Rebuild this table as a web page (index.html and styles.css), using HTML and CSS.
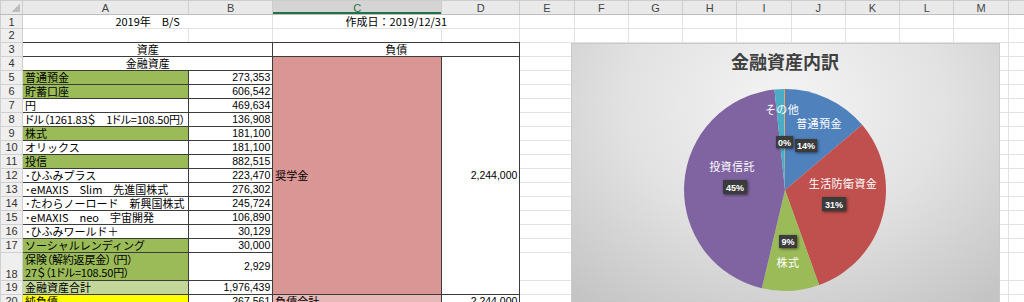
FILE: index.html
```html
<!DOCTYPE html>
<html lang="ja">
<head>
    <meta charset="UTF-8">
    <meta name="viewport" content="width=device-width, initial-scale=1.0">
    <title>2019年 B/S</title>
    <link rel="stylesheet" href="styles.css">
</head>
<body>
<div class="sheet-wrap">
    <table class="sheet">
        <colgroup>
            <col class="c-rh"><col class="c-a"><col class="c-b"><col class="c-c"><col class="c-d">
            <col class="c-std"><col class="c-std"><col class="c-std"><col class="c-std"><col class="c-std">
            <col class="c-std"><col class="c-std"><col class="c-std"><col class="c-std"><col class="c-std">
        </colgroup>
        <thead>
            <tr class="hdr">
                <th class="corner"></th><th>A</th><th>B</th><th class="sel">C</th><th>D</th><th>E</th>
                <th>F</th><th>G</th><th>H</th><th>I</th><th>J</th><th>K</th><th>L</th><th>M</th><th></th>
            </tr>
        </thead>
        <tbody>
            <tr><th>1</th><td colspan="2" class="center">2019年　B/S</td><td colspan="2" class="center">作成日：2019/12/31</td>
                <td></td><td></td><td></td><td></td><td></td><td></td><td></td><td></td><td></td><td></td></tr>
            <tr><th>2</th><td class="top-edge"></td><td class="top-edge"></td><td class="top-edge"></td><td class="top-edge"></td>
                <td></td><td></td><td></td><td></td><td></td><td></td><td></td><td></td><td></td><td></td></tr>
            <tr><th>3</th><td colspan="2" class="bx center">資産</td><td colspan="2" class="bx center">負債</td>
                <td></td><td></td><td></td><td></td><td></td><td></td><td></td><td></td><td></td><td></td></tr>
            <tr><th>4</th><td colspan="2" class="bx center">金融資産</td>
                <td rowspan="16" class="bx loan mid">奨学金</td><td rowspan="16" class="bx num mid">2,244,000</td>
                <td></td><td></td><td></td><td></td><td></td><td></td><td></td><td></td><td></td><td></td></tr>
            <tr><th>5</th><td class="bx green">普通預金</td><td class="bx num">273,353</td>
                <td></td><td></td><td></td><td></td><td></td><td></td><td></td><td></td><td></td><td></td></tr>
            <tr><th>6</th><td class="bx green">貯蓄口座</td><td class="bx num">606,542</td>
                <td></td><td></td><td></td><td></td><td></td><td></td><td></td><td></td><td></td><td></td></tr>
            <tr><th>7</th><td class="bx">円</td><td class="bx num">469,634</td>
                <td></td><td></td><td></td><td></td><td></td><td></td><td></td><td></td><td></td><td></td></tr>
            <tr><th>8</th><td class="bx tight">ドル（1261.83＄　1ドル=108.50円）</td><td class="bx num">136,908</td>
                <td></td><td></td><td></td><td></td><td></td><td></td><td></td><td></td><td></td><td></td></tr>
            <tr><th>9</th><td class="bx green">株式</td><td class="bx num">181,100</td>
                <td></td><td></td><td></td><td></td><td></td><td></td><td></td><td></td><td></td><td></td></tr>
            <tr><th>10</th><td class="bx">オリックス</td><td class="bx num">181,100</td>
                <td></td><td></td><td></td><td></td><td></td><td></td><td></td><td></td><td></td><td></td></tr>
            <tr><th>11</th><td class="bx green">投信</td><td class="bx num">882,515</td>
                <td></td><td></td><td></td><td></td><td></td><td></td><td></td><td></td><td></td><td></td></tr>
            <tr><th>12</th><td class="bx">･ひふみプラス</td><td class="bx num">223,470</td>
                <td></td><td></td><td></td><td></td><td></td><td></td><td></td><td></td><td></td><td></td></tr>
            <tr><th>13</th><td class="bx">･eMAXIS　Slim　先進国株式</td><td class="bx num">276,302</td>
                <td></td><td></td><td></td><td></td><td></td><td></td><td></td><td></td><td></td><td></td></tr>
            <tr><th>14</th><td class="bx">･たわらノーロード　新興国株式</td><td class="bx num">245,724</td>
                <td></td><td></td><td></td><td></td><td></td><td></td><td></td><td></td><td></td><td></td></tr>
            <tr><th>15</th><td class="bx">･eMAXIS　neo　宇宙開発</td><td class="bx num">106,890</td>
                <td></td><td></td><td></td><td></td><td></td><td></td><td></td><td></td><td></td><td></td></tr>
            <tr><th>16</th><td class="bx">･ひふみワールド＋</td><td class="bx num">30,129</td>
                <td></td><td></td><td></td><td></td><td></td><td></td><td></td><td></td><td></td><td></td></tr>
            <tr><th>17</th><td class="bx green">ソーシャルレンディング</td><td class="bx num">30,000</td>
                <td></td><td></td><td></td><td></td><td></td><td></td><td></td><td></td><td></td><td></td></tr>
            <tr class="tall"><th class="bottom">18</th><td class="bx green tight two">保険（解約返戻金）（円）<br>27＄（1ドル=108.50円）</td><td class="bx num mid">2,929</td>
                <td></td><td></td><td></td><td></td><td></td><td></td><td></td><td></td><td></td><td></td></tr>
            <tr><th>19</th><td class="bx green-lt">金融資産合計</td><td class="bx num">1,976,439</td>
                <td></td><td></td><td></td><td></td><td></td><td></td><td></td><td></td><td></td><td></td></tr>
            <tr><th>20</th><td class="bx yellow">純負債</td><td class="bx num">267,561</td>
                <td class="bx loan-lt">負債合計</td><td class="bx num">2,244,000</td>
                <td></td><td></td><td></td><td></td><td></td><td></td><td></td><td></td><td></td><td></td></tr>
        </tbody>
    </table>

    <div class="chart">
        <svg width="429" height="270" viewBox="0 0 429 270">
            <text class="chart-title" x="214" y="26" text-anchor="middle">金融資産内訳</text>
            <g class="pie">
                <path fill="#4f81bd" d="M214 147 L214 46 A101 101 0 0 1 291.14 81.81 Z"/>
                <path fill="#c0504d" d="M214 147 L291.14 81.81 A101 101 0 0 1 248.10 242.07 Z"/>
                <path fill="#9bbb59" d="M214 147 L248.10 242.07 A101 101 0 0 1 190.83 245.30 Z"/>
                <path fill="#8064a2" d="M214 147 L190.83 245.30 A101 101 0 0 1 203.46 46.56 Z"/>
                <path fill="#4bacc6" d="M214 147 L203.46 46.56 A101 101 0 0 1 213.07 46 Z"/>
                <path fill="#f79646" d="M214 147 L213.07 46 A101 101 0 0 1 214 46 Z"/>
            </g>
            <g class="names" text-anchor="middle">
                <text x="211" y="71">その他</text>
                <text x="248" y="85">普通預金</text>
                <text x="161" y="128">投資信託</text>
                <text x="272" y="145">生活防衛資金</text>
                <text x="217" y="224">株式</text>
            </g>
            <g class="pct">
                <rect x="205" y="93" width="17" height="12"/>
                <text x="213.5" y="102.5">0%</text>
                <rect x="224" y="96" width="22" height="13"/>
                <text x="235" y="106">14%</text>
                <rect x="152" y="137" width="24" height="14"/>
                <text x="164" y="147.5">45%</text>
                <rect x="251" y="154" width="24" height="14"/>
                <text x="263" y="164.5">31%</text>
                <rect x="208" y="192" width="18" height="13"/>
                <text x="217" y="202">9%</text>
            </g>
        </svg>
    </div>
</div>
</body>
</html>
```

FILE: styles.css
```css
html, body {
    margin: 0;
    padding: 0;
    background: #fff;
    overflow: hidden;
}
body {
    width: 1024px;
    height: 302px;
    font-family: "Liberation Sans", "Noto Sans CJK JP", sans-serif;
    color: #000;
}
.sheet-wrap {
    position: relative;
    width: 1024px;
    height: 302px;
    overflow: hidden;
}
.sheet {
    border-collapse: collapse;
    table-layout: fixed;
    width: 1063px;
}
.c-rh { width: 22px; }
.c-a { width: 165px; }
.c-b { width: 84px; }
.c-c { width: 168px; }
.c-d { width: 78px; }
.c-std { width: 54px; }

.sheet tr {
    height: 13.75px;
}
.sheet tr.tall {
    height: 27.5px;
}
.sheet td {
    border: 1px solid #e2e2e2;
    padding: 0 2px;
    font-size: 11px;
    line-height: 13px;
    white-space: nowrap;
    overflow: hidden;
    vertical-align: bottom;
    font-family: "Noto Sans CJK JP", "Liberation Sans", sans-serif;
}
.sheet tbody th {
    background: #efefef;
    border: 1px solid #d0d0d0;
    font-weight: normal;
    font-size: 11px;
    line-height: 12px;
    color: #333;
    padding: 0;
    text-align: center;
}
.sheet tbody th.bottom {
    vertical-align: bottom;
}
.sheet .hdr {
    height: 14px;
}
.sheet .hdr th {
    background: #e9e9e9;
    border: 1px solid #cdcdcd;
    border-bottom-color: #bdbdbd;
    font-weight: normal;
    font-size: 11px;
    line-height: 12px;
    color: #444;
    padding: 0;
}
.sheet .hdr th.sel {
    background: #d4d4d4;
    color: #217346;
    box-shadow: inset 0 -2px 0 #217346;
}
.sheet .hdr th.corner {
    background: #e9e9e9 linear-gradient(135deg, transparent 50%, #bdbdbd 50%) no-repeat right 2px bottom 2px / 9px 9px;
}

.sheet td.bx {
    border: 1px solid #3c3c3c;
}
.sheet td.top-edge {
    border-bottom-color: #3c3c3c;
}
.center {
    text-align: center;
}
.sheet td.num {
    text-align: right;
    font-family: "Liberation Sans", sans-serif;
    font-size: 10.5px;
}
.sheet td.mid {
    vertical-align: middle;
}
.sheet td.tight {
    font-feature-settings: "palt";
    letter-spacing: -0.2px;
    padding-right: 0;
}
.sheet td.two {
    line-height: 13.5px;
}
.green { background: #9bbb59; }
.green-lt { background: #c4d79b; }
.yellow { background: #ffff00; }
.loan { background: #da9694; }
.loan-lt { background: #e6b8b7; }

/* chart floating over the sheet */
.chart {
    position: absolute;
    left: 571px;
    top: 43px;
    width: 429px;
    height: 270px;
    border: 1px solid #c9c9c9;
    box-sizing: border-box;
    background: radial-gradient(ellipse 75% 95% at 50% 22%, #f4f4f4 0%, #e2e2e2 50%, #c4c4c4 100%);
}
.chart svg {
    display: block;
    position: absolute;
    left: -1px;
    top: -1px;
}
.chart-title {
    font-family: "Noto Sans CJK JP", sans-serif;
    font-size: 18px;
    font-weight: bold;
    fill: #404040;
}
.names text {
    font-family: "Noto Sans CJK JP", sans-serif;
    font-size: 11px;
    fill: #fff;
    letter-spacing: 0.4px;
}
.pct rect {
    fill: #3b3b3b;
    filter: drop-shadow(1px 1px 1.5px rgba(0, 0, 0, 0.55));
}
.pct text {
    font-family: "Liberation Sans", sans-serif;
    font-size: 9px;
    font-weight: bold;
    fill: #fff;
    text-anchor: middle;
}
```
